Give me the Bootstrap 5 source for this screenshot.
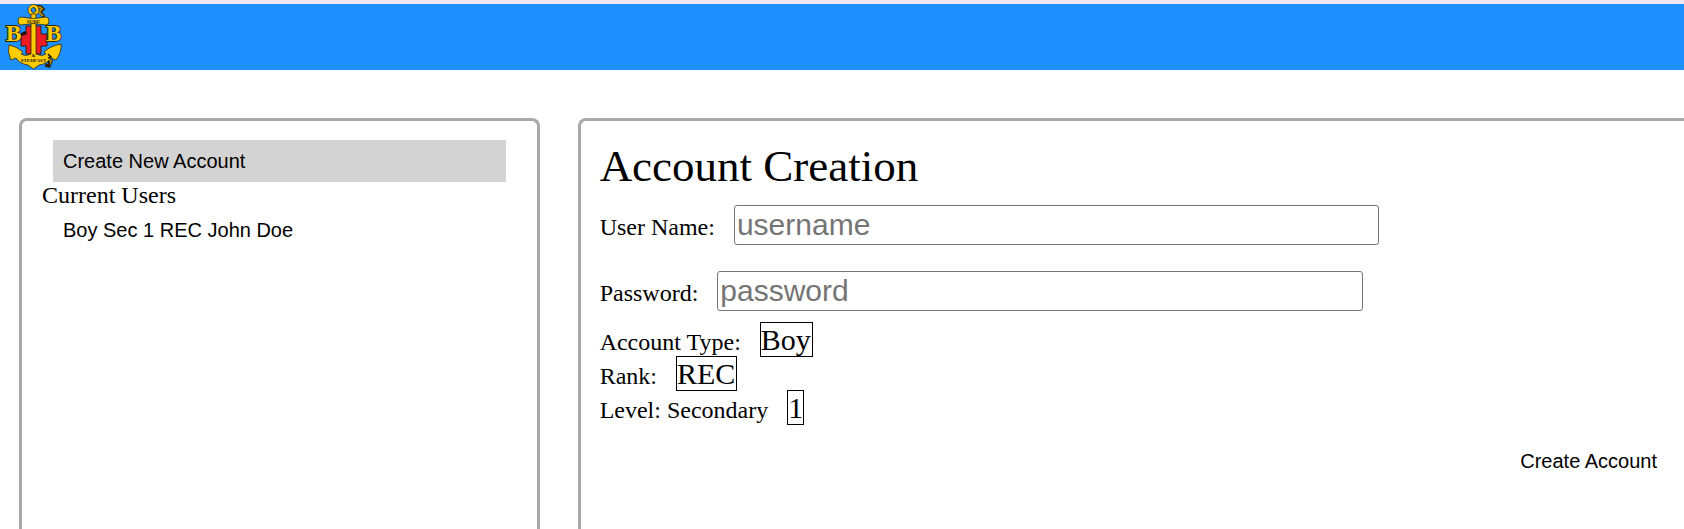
<!DOCTYPE html>
<html lang="en">
<head>
<meta charset="utf-8">
<meta name="viewport" content="width=device-width, initial-scale=1">
<title>Account Creation</title>
<link href="https://cdn.jsdelivr.net/npm/bootstrap@5.3.0/dist/css/bootstrap.min.css" rel="stylesheet">
<style>
  body { font-family: "Liberation Serif", "Times New Roman", serif; font-size: 24px; line-height: 28px; color: #000; background: #fff; }
  .site-header { background: #1e90ff; height: 70px; border-top: 4px solid #efe7f3; padding-left: 4px; }
  .crest { width: 60px; height: 66px; }
  .crest text { font-family: "Liberation Serif", serif; font-weight: bold; }
  .crest-letter { font-size: 23px; fill: #ffcc00; stroke: #30270b; stroke-width: 2px; paint-order: stroke; }
  .panels { display: grid; grid-template-columns: 8fr 17fr; gap: 38px; padding: 48px 0 0 19px; }
  .panel { border: 3px solid #a9a9a9; border-bottom: 0; border-radius: 8px 8px 0 0; padding: 19px 9px 0 20px; min-width: 0; }
  .panel-main { border-right: 0; border-top-right-radius: 0; padding-left: 19px; }
  .user-item { font-family: "Liberation Sans", Arial, sans-serif; font-size: 20px; line-height: 22px; color: #000; background: transparent; border: 0; padding: 10px; text-align: left; }
  .user-list .user-item { margin: 0 22px 0 11px; }
  .user-list div { line-height: 27px; }
  .user-item.selected { background: #d3d3d3; }
  .page-title { font-size: 45px; line-height: 52px; font-weight: 400; margin: 0 0 13px; }
  .field { gap: 19px; }
  .entry-row { margin-bottom: 26px; }
  .entry-row + .entry-row { margin-bottom: 11px; }
  .entry { width: 60%; height: 40px; padding: 1px 2px; font-family: "Liberation Sans", Arial, sans-serif; font-size: 30px; line-height: 34px; border: 1px solid #767676; border-radius: 3px; }
  .entry::placeholder { color: #757575; opacity: 1; }
  .choice { appearance: none; font-size: 30px; line-height: 33px; height: 35px; padding: 0; border: 1px solid #000; border-radius: 0; background: #fff; color: #000; margin-bottom: -1px; font-family: inherit; }
  .choice-level { width: 17px; text-align: center; }
</style>
</head>
<body class="d-flex flex-column vh-100 overflow-hidden">
<header class="site-header">
  <a href="#" class="d-inline-block" aria-label="Home">
  <svg class="crest d-block" viewBox="0 0 60 66" aria-hidden="true">
    <path d="M31 5q4-5 8 0l-3 3 4 5M19 30l-3 5M42 53l5 4-2 5-4-1" fill="none" stroke="#30270b" stroke-width="3.500"/>
    <path d="M31 5q4-4 7 0l-3 3 4 4M43 54l4 3-2 4" fill="none" stroke="#c99b00" stroke-width="1.500"/>
    <path d="M22 22h15v8h6v12h-6v8H22v-8h-5V30h5z" fill="#ed1c24" stroke="#222" stroke-width="1"/>
    <path d="M17 29l4-2 2 3-5 2z" fill="#181208"/>
    <g fill="#ffcc00" stroke="#30270b" stroke-width=".8">
      <path d="M29.500 0.500a5.500 5.500 0 1 0 0.010 0zM29.500 3.500a2.500 2.500 0 1 1-0.010 0z" fill-rule="evenodd"/>
      <path d="M5 41Q12 42 19 48L17 50Q21 53 27 50L27 10H32L32 50Q38 53 42 50L40 48Q46 42 57 40Q58 48 52 56L47 54Q43 60 35 61L29.500 65 24 61Q16 60 12 54L7 56Q3 48 5 41z"/>
      <path d="M17 13q12 3 25 0 3 0 3 4t-3 4q-13-3-25 0-3 0-3-4t3-4z"/>
    </g>
    <path d="M44 50l3 3-3 1M44 57q2 3 0 5" fill="none" stroke="#181208" stroke-width="1.500"/>
    <text class="crest-letter" x="2" y="37">B</text>
    <text class="crest-letter" x="42" y="37">B</text>
    <text x="29.500" y="19" font-size="5" text-anchor="middle" fill="#181208">SURE</text>
    <text x="29.500" y="53" font-size="5" text-anchor="middle" fill="#181208">&amp;</text>
    <text x="29.500" y="58" font-size="5" text-anchor="middle" fill="#181208">STEDFAST</text>
  </svg>
  </a>
</header>
<main class="panels flex-fill">
  <nav class="panel user-list d-flex flex-column" aria-label="Accounts">
    <button type="button" class="user-item selected">Create New Account</button>
    <div>Current Users</div>
    <button type="button" class="user-item">Boy Sec 1 REC John Doe</button>
  </nav>
  <section class="panel panel-main">
    <form>
      <h1 class="page-title">Account Creation</h1>
      <div class="field entry-row d-flex align-items-baseline">
        <label for="username">User Name:</label>
        <input class="entry" id="username" type="text" placeholder="username">
      </div>
      <div class="field entry-row d-flex align-items-baseline">
        <label for="password">Password:</label>
        <input class="entry" id="password" type="password" placeholder="password">
      </div>
      <div class="field d-flex align-items-baseline">
        <label for="type">Account Type:</label>
        <select class="choice" id="type"><option>Boy</option></select>
      </div>
      <div class="field d-flex align-items-baseline">
        <label for="rank">Rank:</label>
        <select class="choice" id="rank"><option>REC</option></select>
      </div>
      <div class="field d-flex align-items-baseline">
        <label for="level">Level: Secondary</label>
        <select class="choice choice-level" id="level"><option>1</option></select>
      </div>
      <div class="text-end mt-3 me-2">
        <button type="submit" class="user-item">Create Account</button>
      </div>
    </form>
  </section>
</main>
<script src="https://cdn.jsdelivr.net/npm/bootstrap@5.3.0/dist/js/bootstrap.bundle.min.js"></script>
</body>
</html>
